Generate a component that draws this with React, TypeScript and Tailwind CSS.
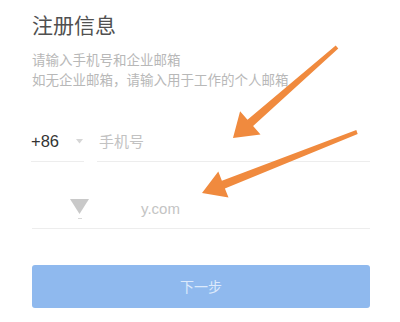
import React from "react";

function arrowPoints(tx: number, ty: number, px: number, py: number, headLen: number, headHalf: number, tailHalf: number, neckHalf: number) {
  const dx = px - tx;
  const dy = py - ty;
  const len = Math.sqrt(dx * dx + dy * dy);
  const ux = dx / len;
  const uy = dy / len;
  const nx = -uy;
  const ny = ux;
  const bx = px - ux * headLen;
  const by = py - uy * headLen;
  const pts: [number, number][] = [
    [tx + nx * tailHalf, ty + ny * tailHalf],
    [bx + nx * neckHalf, by + ny * neckHalf],
    [bx + nx * headHalf, by + ny * headHalf],
    [px, py],
    [bx - nx * headHalf, by - ny * headHalf],
    [bx - nx * neckHalf, by - ny * neckHalf],
    [tx - nx * tailHalf, ty - ny * tailHalf],
  ];
  return pts.map((p) => `${p[0].toFixed(1)},${p[1].toFixed(1)}`).join(" ");
}

export default function App() {
  const font = { fontFamily: '"Noto Sans CJK SC", "Noto Sans", sans-serif' };
  return (
    <div className="relative w-[400px] h-[322px] bg-white overflow-hidden" style={font}>
      <div className="flex flex-col pl-[31px] pr-[30px]">
        <h1 className="mt-[10px] ml-[1px] text-[21px] leading-[28px] text-[#505050] font-normal">注册信息</h1>
        <div className="mt-[12px] ml-[1px] text-[13.5px] leading-[19.6px] text-[#b8b8b8]">
          <div>请输入手机号和企业邮箱</div>
          <div>如无企业邮箱，请输入用于工作的个人邮箱</div>
        </div>
        <div className="mt-[33px] flex h-[40px]">
          <div className="w-[53px] flex items-center border-b border-[#ededed]">
            <span className="text-[16.5px] text-[#333333]" style={{ fontFamily: '"Liberation Sans", Arial, sans-serif' }}>+86</span>
            <svg className="ml-[17px]" width="7" height="5" viewBox="0 0 7 5">
              <polygon points="0,0 7,0 3.5,4.5" fill="#d6d6d6" />
            </svg>
          </div>
          <div className="ml-[13px] flex-1 flex items-center border-b border-[#ededed] pl-[2px]">
            <span className="text-[15px] text-[#c2c2c2]">手机号</span>
          </div>
        </div>
        <div className="mt-[28px] h-[39px] flex items-center border-b border-[#ededed] ml-[1px]">
          <div className="ml-[38px] flex flex-col items-center w-[19px]">
            <svg width="19" height="15" viewBox="0 0 19 15">
              <polygon points="0,0 19,0 9.5,15" fill="#c9c9c9" />
            </svg>
            <div className="mt-[4px] w-[4px] h-[1px] bg-[#d8d8d8]" />
          </div>
          <span className="ml-[52px] text-[15px] text-[#c4c4c4]" style={{ fontFamily: '"Liberation Sans", Arial, sans-serif' }}>y.com</span>
        </div>
        <button className="mt-[36px] ml-[1px] h-[43px] rounded-[3px] bg-[#8fb9ee] text-[14px] text-[#dce9fb] flex items-center justify-center">
          下一步
        </button>
      </div>
      <svg className="absolute left-0 top-0" width="400" height="322" viewBox="0 0 400 322">
        <polygon points={arrowPoints(337, 47, 233, 138, 23, 15.5, 2, 4.2)} fill="#f08a3e" />
        <polygon points={arrowPoints(357, 132, 202, 193, 23, 14, 2, 4.2)} fill="#f08a3e" />
      </svg>
    </div>
  );
}
